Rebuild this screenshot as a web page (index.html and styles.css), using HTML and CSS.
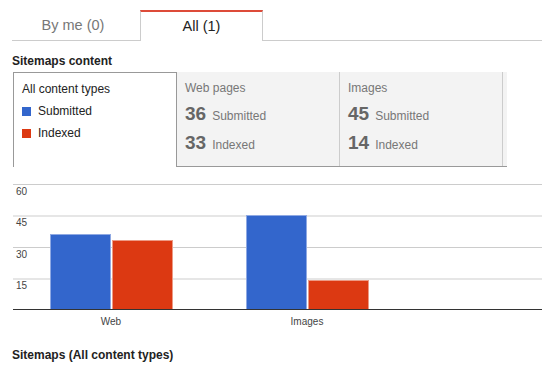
FILE: index.html
```html
<!DOCTYPE html>
<html lang="en">
<head>
<meta charset="utf-8">
<title>Sitemaps</title>
<link rel="stylesheet" href="styles.css">
</head>
<body>
  <div class="tabs">
    <div class="tab">By me (0)</div>
    <div class="tab tab-active">All (1)</div>
  </div>

  <h2 class="section-title first">Sitemaps content</h2>

  <div class="content-box">
    <div class="legend-cell">
      <div class="legend-title">All content types</div>
      <div class="legend-row"><span class="swatch swatch-blue"></span>Submitted</div>
      <div class="legend-row"><span class="swatch swatch-red"></span>Indexed</div>
    </div>
    <div class="stats">
      <div class="stat-cell">
        <div class="stat-title">Web pages</div>
        <div class="stat-row"><span class="stat-num">36</span><span class="stat-label">Submitted</span></div>
        <div class="stat-row"><span class="stat-num">33</span><span class="stat-label">Indexed</span></div>
      </div>
      <div class="stat-cell">
        <div class="stat-title">Images</div>
        <div class="stat-row"><span class="stat-num">45</span><span class="stat-label">Submitted</span></div>
        <div class="stat-row"><span class="stat-num">14</span><span class="stat-label">Indexed</span></div>
      </div>
      <div class="stat-rest"></div>
    </div>
  </div>

  <div class="chart">
    <div class="plot">
      <div class="grid">
        <div class="grid-row"><span class="axis-label">60</span></div>
        <div class="grid-row alt"><span class="axis-label">45</span></div>
        <div class="grid-row"><span class="axis-label">30</span></div>
        <div class="grid-row alt"><span class="axis-label">15</span></div>
      </div>
      <div class="bars">
        <div class="category">
          <div class="bar bar-blue" style="height:75px"></div>
          <div class="bar bar-red" style="height:68.75px"></div>
        </div>
        <div class="category">
          <div class="bar bar-blue" style="height:93.75px"></div>
          <div class="bar bar-red" style="height:29.17px"></div>
        </div>
      </div>
    </div>
    <div class="x-labels">
      <div class="x-label">Web</div>
      <div class="x-label">Images</div>
    </div>
  </div>

  <h2 class="section-title second">Sitemaps (All content types)</h2>
</body>
</html>
```

FILE: styles.css
```css
* {
  box-sizing: border-box;
}

body {
  margin: 0;
  font-family: "Liberation Sans", Arial, sans-serif;
  color: #222;
  background: #fff;
}

/* Tabs */
.tabs {
  display: flex;
  margin-left: 12px;
  padding-top: 10px;
  height: 41px;
  border-bottom: 1px solid #ccc;
}

.tab {
  width: 128px;
  height: 30px;
  display: flex;
  align-items: center;
  justify-content: center;
  padding-right: 6px;
  font-size: 14.5px;
  color: #777;
}

.tab-active {
  width: 123px;
  height: 31px;
  padding-right: 0;
  margin-bottom: -1px;
  background: #fff;
  color: #222;
  border-top: 2px solid #dd4b39;
  border-left: 1px solid #ccc;
  border-right: 1px solid #ccc;
  padding-bottom: 1px;
}

/* Section titles */
.section-title {
  margin: 0;
  margin-left: 12px;
  font-size: 12px;
  line-height: 14px;
  font-weight: bold;
  color: #222;
}

.section-title.first {
  margin-top: 13px;
}

.section-title.second {
  margin-top: 20px;
}

/* Content box */
.content-box {
  display: flex;
  margin: 4px 0 0 13px;
  height: 95px;
}

.legend-cell {
  width: 164px;
  border: 1px solid #999;
  border-bottom: none;
  padding: 9px 0 0 8px;
  background: #fff;
  font-size: 12px;
  line-height: 14px;
}

.legend-title {
  color: #222;
}

.legend-row {
  display: flex;
  align-items: center;
  margin-top: 8px;
  color: #222;
}

.swatch {
  display: inline-block;
  width: 9px;
  height: 9px;
  margin-right: 7px;
}

.swatch-blue {
  background: #3366cc;
}

.swatch-red {
  background: #dc3912;
}

.stats {
  display: flex;
  width: 330px;
  background: #f3f3f3;
  border-bottom: 1px solid #999;
}

.stat-cell {
  width: 163px;
  border-right: 1px solid #ccc;
  padding: 9px 0 0 8px;
}

.stat-rest {
  flex: 1;
}

.stat-title {
  font-size: 12px;
  line-height: 14px;
  color: #777;
}

.stat-row {
  display: flex;
  align-items: baseline;
  height: 29px;
  line-height: 29px;
}

.stat-title + .stat-row {
  margin-top: 4px;
}

.stat-num {
  font-size: 19px;
  font-weight: bold;
  color: #666;
  margin-right: 6px;
}

.stat-label {
  font-size: 12px;
  color: #777;
}

/* Chart */
.chart {
  margin: 17px 0 0 13px;
}

.plot {
  display: grid;
  height: 126px;
  border-bottom: 1px solid #333;
}

.grid,
.bars {
  grid-area: 1 / 1;
}

.grid {
  display: flex;
  flex-direction: column;
}

.grid-row {
  flex: 1;
  border-top: 1px solid #ccc;
  padding: 1px 0 0 3px;
}

.grid-row.alt {
  border-top: 2px solid #e6e6e6;
  padding-top: 0;
}

.axis-label {
  display: block;
  font-size: 10px;
  line-height: 12px;
  color: #444;
}

.bars {
  display: flex;
  align-items: flex-end;
}

.category {
  width: 196px;
  display: flex;
  justify-content: center;
  align-items: flex-end;
  gap: 1px;
}

.bar {
  width: 61px;
}

.bar-blue {
  background: #3366cc;
  border: 1px solid #8fa9e3;
  border-bottom: none;
}

.bar-red {
  background: #dc3912;
  border: 1px solid #ec9a85;
  border-bottom: none;
}

.x-labels {
  display: flex;
  margin-top: 6px;
}

.x-label {
  width: 196px;
  text-align: center;
  font-size: 10px;
  line-height: 12px;
  color: #444;
}
```
